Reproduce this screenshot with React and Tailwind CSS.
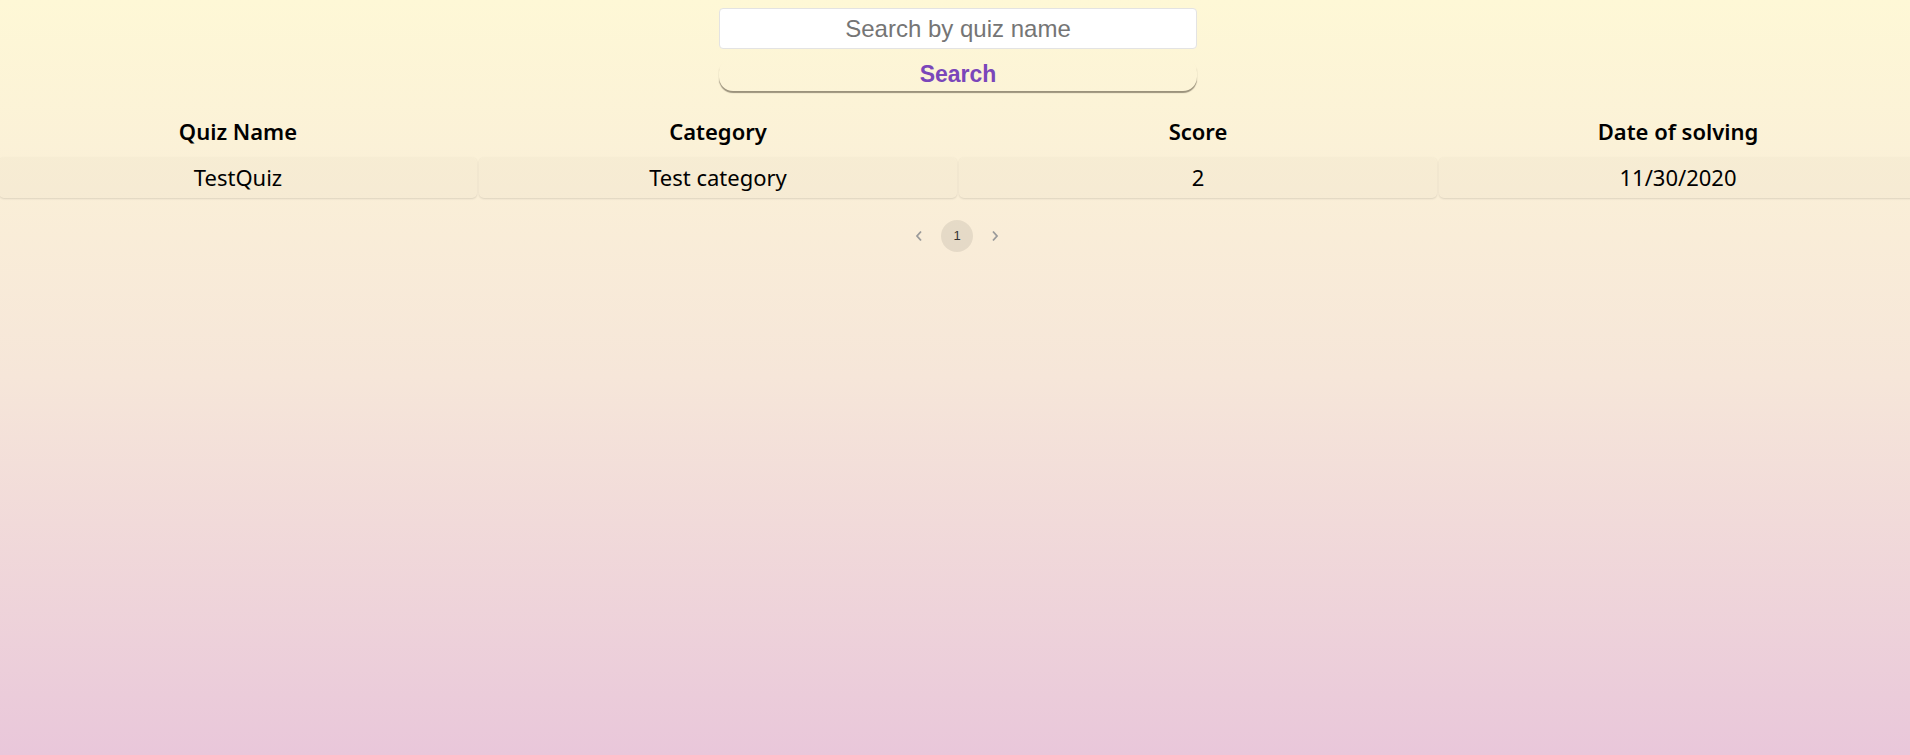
import React from 'react';

const rows = [
  { name: 'TestQuiz', category: 'Test category', score: 2, date: '11/30/2020' },
];

const headers = ['Quiz Name', 'Category', 'Score', 'Date of solving'];

export default function App() {
  return (
    <div className="min-h-screen w-full overflow-hidden bg-gradient-to-b from-[#fef8d6] via-[#f6e6d9] to-[#e9c7da] font-['Noto_Sans',sans-serif] text-black">
      {/* Search */}
      <div className="flex justify-center pl-[6px] pt-[8px]">
        <div className="w-[478px]">
          <input
            type="text"
            placeholder="Search by quiz name"
            className="block h-[41px] w-full rounded-[4px] border border-[#e3e3e3] bg-white text-center font-['Liberation_Sans',Arial,sans-serif] text-[24px] text-[#555] placeholder:text-[#757575] outline-none"
          />
          <button className="mt-[9px] flex h-[33px] w-full items-center justify-center rounded-[14px] bg-transparent font-['Liberation_Sans',Arial,sans-serif] text-[23px] font-bold text-[#7a46ba] shadow-[0_2px_1px_#9b927c]">
            Search
          </button>
        </div>
      </div>

      {/* Table */}
      <div className="mt-[20px] ml-[-1px] w-[1920px]">
        <div className="grid grid-cols-[repeat(4,478px)] gap-x-[2px]">
          {headers.map((h) => (
            <div key={h} className="flex h-[40px] items-center justify-center text-[22px] font-semibold">
              {h}
            </div>
          ))}
        </div>
        {rows.map((r) => (
          <div key={r.name} className="mt-[6px] grid grid-cols-[repeat(4,478px)] gap-x-[2px]">
            {[r.name, r.category, r.score, r.date].map((v, i) => (
              <div
                key={i}
                className="flex h-[41px] items-center justify-center rounded-[5px] bg-black/[0.015] text-[22px] shadow-[0_1px_2px_rgba(0,0,0,0.12)]"
              >
                {v}
              </div>
            ))}
          </div>
        ))}
      </div>

      {/* Pagination */}
      <div className="mt-[22px] flex items-center justify-center gap-[14px] pl-[4px] font-['Liberation_Sans',Arial,sans-serif]">
        <button className="flex h-[32px] w-[16px] items-center justify-center text-[#9a9a9a]">
          <svg width="8" height="12" viewBox="0 0 8 12" fill="none" stroke="currentColor" strokeWidth="1.8">
            <path d="M6 1.5 L2 6 L6 10.5" />
          </svg>
        </button>
        <button className="flex h-[32px] w-[32px] items-center justify-center rounded-full bg-black/[0.08] text-[13px] text-[#333]">
          1
        </button>
        <button className="flex h-[32px] w-[16px] items-center justify-center text-[#9a9a9a]">
          <svg width="8" height="12" viewBox="0 0 8 12" fill="none" stroke="currentColor" strokeWidth="1.8">
            <path d="M2 1.5 L6 6 L2 10.5" />
          </svg>
        </button>
      </div>
    </div>
  );
}
